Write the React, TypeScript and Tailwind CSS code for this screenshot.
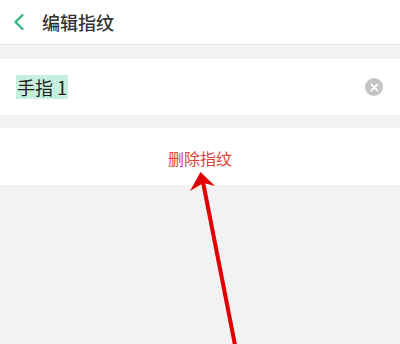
import { ChevronLeft } from 'lucide-react';

const font = { fontFamily: '"Noto Sans CJK SC", "Noto Sans", sans-serif' };

export default function App() {
  return (
    <div className="relative w-[400px] h-[344px] overflow-hidden bg-[#f2f2f2]" style={font}>
      <header className="h-[45px] bg-white flex items-center border-b border-[#e6e6e6]">
        <ChevronLeft className="w-[28px] h-[28px] ml-[5px] text-[#34b883]" strokeWidth={2} />
        <h1 className="ml-[9px] text-[18px] font-medium text-[#333]">编辑指纹</h1>
      </header>

      <div className="mt-[14px] h-[56px] bg-white flex items-center justify-between px-4">
        <span className="bg-[#c6f0dd] text-[18px] leading-[24px] text-[#222] px-[1px]">手指 1</span>
        <span className="w-[18px] h-[18px] rounded-full bg-[#c4c4c4] flex items-center justify-center mr-[1px]">
          <svg viewBox="0 0 10 10" className="w-[9px] h-[9px]">
            <path d="M1.5 1.5 L8.5 8.5 M8.5 1.5 L1.5 8.5" stroke="white" strokeWidth="1.8" strokeLinecap="round" />
          </svg>
        </span>
      </div>

      <div className="mt-[13px] h-[57px] bg-white flex items-center justify-center">
        <span className="text-[16px] text-[#d9483b] mt-[2px]">删除指纹</span>
      </div>

      <svg className="absolute left-0 top-0 w-[400px] h-[344px]" viewBox="0 0 400 344">
        <line x1="236" y1="350" x2="203" y2="182" stroke="#e10000" strokeWidth="4" />
        <path d="M200.5 172 L215 186 L203.5 183 L190 191 Z" fill="#e10000" />
      </svg>
    </div>
  );
}
